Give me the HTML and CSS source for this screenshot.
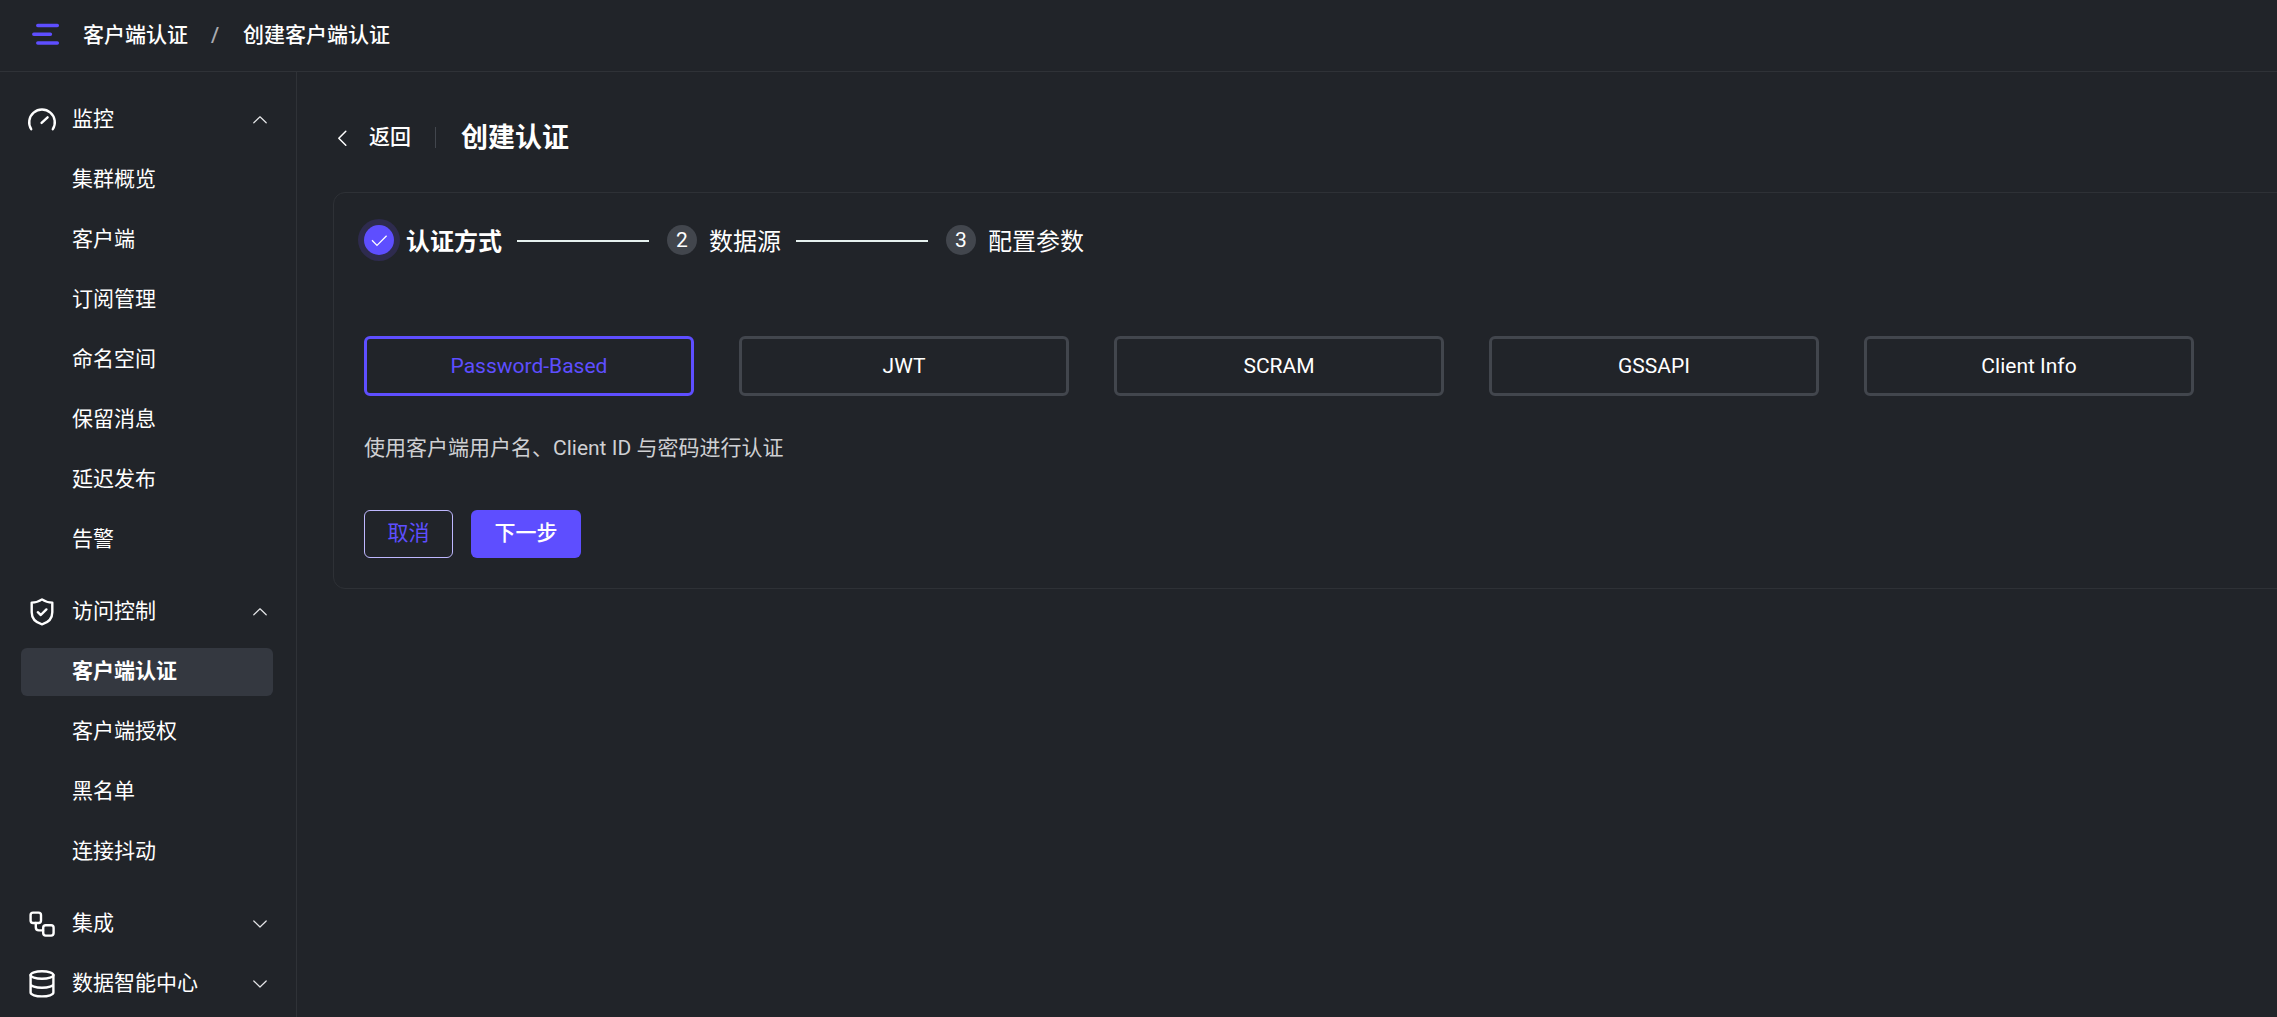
FILE: index.html
```html
<!DOCTYPE html>
<html lang="zh-CN">
<head>
<meta charset="utf-8">
<title>创建客户端认证</title>
<link rel="stylesheet" href="styles.css">
</head>
<body>
<header class="topbar">
  <svg class="toggle" width="28" height="24" viewBox="0 0 28 24"><path d="M5.8 3.4h19.5M1.8 12.3h16.6M5.8 21h19.5"/></svg>
  <nav class="breadcrumb"><span>客户端认证</span><span class="slash">/</span><span>创建客户端认证</span></nav>
</header>
<div class="body">
  <aside class="sidebar">
    <section class="group">
      <div class="row head">
        <svg class="icon" viewBox="0 0 36 36"><path d="M7.2 27.2A12.8 12.8 0 1 1 28.8 27.2M17.6 20.9L23.6 15.3"/></svg>
        <span>监控</span>
        <svg class="chevron" viewBox="0 0 16 16"><path d="M1.8 10.8L8 4.8L14.2 10.8"/></svg>
      </div>
      <a class="row">集群概览</a>
      <a class="row">客户端</a>
      <a class="row">订阅管理</a>
      <a class="row">命名空间</a>
      <a class="row">保留消息</a>
      <a class="row">延迟发布</a>
      <a class="row">告警</a>
    </section>
    <section class="group">
      <div class="row head">
        <svg class="icon" viewBox="0 0 36 36"><path d="M18 5.4C21.2 7.7 24.6 8.6 28.3 8.6V18.2C28.3 24.2 24.2 28.5 18 30.3C11.8 28.5 7.7 24.2 7.7 18.2V8.6C11.4 8.6 14.8 7.7 18 5.4ZM13.8 18.2L16.8 21L22.4 15.4"/></svg>
        <span>访问控制</span>
        <svg class="chevron" viewBox="0 0 16 16"><path d="M1.8 10.8L8 4.8L14.2 10.8"/></svg>
      </div>
      <a class="row active">客户端认证</a>
      <a class="row">客户端授权</a>
      <a class="row">黑名单</a>
      <a class="row">连接抖动</a>
    </section>
    <section class="group">
      <div class="row head">
        <svg class="icon" viewBox="0 0 36 36"><rect x="6.6" y="6.6" width="10.4" height="10.4" rx="2.5"/><rect x="19.2" y="19.2" width="10.4" height="10.4" rx="2.5"/><path d="M11.8 17V21.3Q11.8 24.4 14.9 24.4H19"/></svg>
        <span>集成</span>
        <svg class="chevron" viewBox="0 0 16 16"><path d="M1.8 5L8 11L14.2 5"/></svg>
      </div>
      <div class="row head">
        <svg class="icon" viewBox="0 0 36 36"><ellipse cx="18" cy="9" rx="11.4" ry="3.8"/><path d="M6.6 9V26.6C6.6 28.7 11.7 30.4 18 30.4S29.4 28.7 29.4 26.6V9M6.6 17.9C6.6 20 11.7 21.7 18 21.7S29.4 20 29.4 17.9"/></svg>
        <span>数据智能中心</span>
        <svg class="chevron" viewBox="0 0 16 16"><path d="M1.8 5L8 11L14.2 5"/></svg>
      </div>
    </section>
  </aside>
  <main class="main">
    <div class="page-head">
      <svg class="back-arrow" width="12" height="18" viewBox="0 0 12 18"><path d="M9.8 2.2L2.8 9.2L9.8 16.2"/></svg>
      <span class="back">返回</span>
      <i class="divider"></i>
      <h1>创建认证</h1>
    </div>
    <div class="card">
      <div class="steps">
        <div class="step current"><span class="dot"><svg width="20" height="16" viewBox="0 0 20 16"><path d="M3 8.3L8 13.4L17.6 3.8"/></svg></span><span class="label">认证方式</span></div>
        <i class="line"></i>
        <div class="step"><span class="dot">2</span><span class="label">数据源</span></div>
        <i class="line"></i>
        <div class="step"><span class="dot">3</span><span class="label">配置参数</span></div>
      </div>
      <div class="methods">
        <div class="method selected">Password-Based</div>
        <div class="method">JWT</div>
        <div class="method">SCRAM</div>
        <div class="method">GSSAPI</div>
        <div class="method">Client Info</div>
      </div>
      <p class="desc">使用客户端用户名、Client ID 与密码进行认证</p>
      <div class="actions">
        <button class="btn cancel">取消</button>
        <button class="btn primary">下一步</button>
      </div>
    </div>
  </main>
</div>
</body>
</html>
```
FILE: styles.css
```css
* { box-sizing: border-box; }
body {
  margin: 0;
  height: 1017px;
  overflow: hidden;
  display: flex;
  flex-direction: column;
  background: #212429;
  color: #fff;
  font: 21px/30px Roboto, "Noto Sans CJK SC", sans-serif;
}
svg { display: block; flex: none; fill: none; stroke: #fff; stroke-linecap: round; stroke-linejoin: round; }
.topbar {
  flex: none;
  height: 72px;
  padding: 0 0 3px 32px;
  display: flex;
  align-items: center;
  border-bottom: 1px solid #2f3237;
}
.toggle { stroke: #5e4eff; stroke-width: 3.5; }
.breadcrumb { display: flex; margin-left: 23px; padding-top: 1px; font-weight: 500; }
.slash { width: 55px; padding-right: 1px; text-align: center; color: #a9abb0; }
.body { flex: 1; min-height: 0; display: flex; }
.sidebar {
  flex: none;
  width: 297px;
  padding: 24px 23px 0 21px;
  border-right: 1px solid #2f3237;
  display: flex;
  flex-direction: column;
  gap: 24px;
}
.group { display: flex; flex-direction: column; gap: 12px; }
.row {
  height: 48px;
  padding: 0 5px 2px 51px;
  display: flex;
  align-items: center;
  border-radius: 6px;
}
.head { padding: 0 5px 0 3px; }
.head span { flex: 1; margin-left: 12px; padding-bottom: 2px; }
.icon { width: 36px; height: 36px; stroke-width: 2.4; }
.chevron { width: 16px; height: 16px; stroke-width: 1.2; stroke: #e5e6e8; }
.active { background: #343840; font-weight: 700; }
.main { flex: 1; min-width: 0; padding: 48px 0 0 36px; }
.page-head { display: flex; align-items: center; height: 36px; }
.back-arrow { margin-left: 3px; margin-bottom: 1px; stroke-width: 1.5; }
.back { margin-left: 21px; padding-bottom: 2px; font-weight: 500; }
.divider { width: 1px; height: 21px; margin: 0 25px 1px 24px; background: #42464d; }
h1 { margin: 0; font-size: 27px; line-height: 36px; font-weight: 700; }
.card {
  width: 1980px;
  height: 397px;
  margin-top: 36px;
  padding: 32px 30px 0;
  border: 1px solid #2e3136;
  border-radius: 12px;
}
.steps { display: flex; align-items: center; height: 30px; }
.step { display: flex; align-items: center; gap: 12px; }
.dot {
  width: 30px;
  height: 30px;
  border-radius: 50%;
  background: #42464d;
  display: flex;
  align-items: center;
  justify-content: center;
}
.dot svg { stroke-width: 1.3; stroke-linecap: butt; stroke-linejoin: miter; }
.label { font-size: 24px; padding-top: 3px; }
.current .dot { background: #5e4eff; box-shadow: 0 0 0 6px #2e2b4e; }
.current .label { font-weight: 700; }
.line { width: 132px; height: 2px; margin: 2px 18px 0 15px; background: #e6f1ef; }
.methods { display: grid; grid-template-columns: repeat(5, 330px); gap: 45px; margin-top: 81px; }
.method {
  height: 60px;
  border: 3px solid #42464d;
  border-radius: 6px;
  display: flex;
  align-items: center;
  justify-content: center;
}
.selected { border-color: #5e4eff; color: #5e4eff; }
.desc { margin: 37px 0 0; color: #cfd0d3; }
.actions { display: flex; gap: 18px; margin-top: 47px; }
.btn {
  height: 48px;
  padding: 0 0 2px;
  border: 0;
  border-radius: 6px;
  font: inherit;
}
.cancel { width: 89px; border: 1px solid #bfb8ff; background: transparent; color: #5e4eff; }
.primary { width: 110px; background: #5e4eff; color: #fff; font-weight: 500; }
```
